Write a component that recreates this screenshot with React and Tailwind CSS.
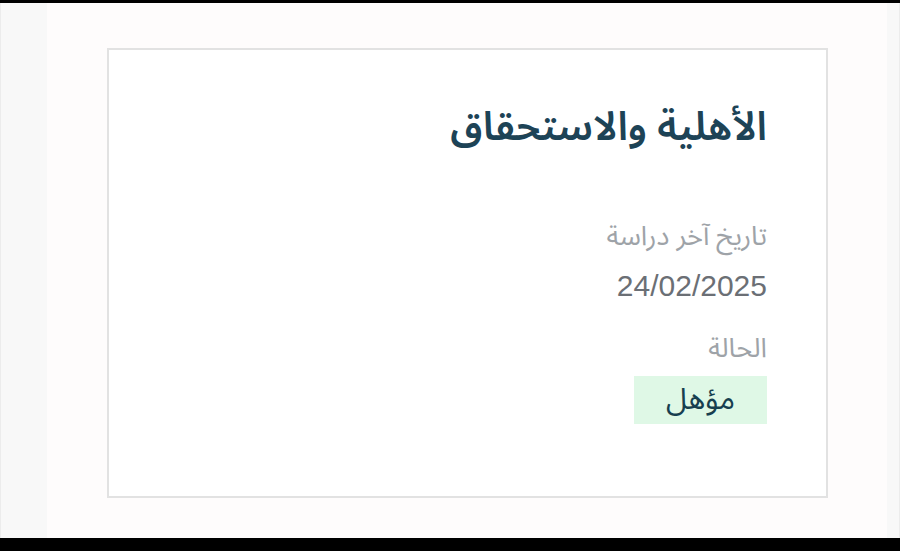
import React from "react";

const arabic = { fontFamily: '"Noto Sans Arabic", "Noto Sans", "DejaVu Sans", sans-serif' };

const Label = ({ children, className = "" }) => (
  <div className={"text-[27px] leading-[32px] text-[#9ea3a8] " + className}>{children}</div>
);

export default function App() {
  return (
    <div dir="rtl" className="flex h-[551px] w-[900px] flex-col bg-black pt-[3px] pb-[13px]" style={arabic}>
      <div className="flex flex-1 flex-row-reverse bg-[#f8f8f8]">
        <div className="w-[47px] border-l border-[#ececec]" />
        <div className="flex flex-1 flex-col bg-[#fefcfc] pt-[45px] pr-[59px] pl-[60px]">
          <div className="h-[450px] border-2 border-[#e2e2e2] bg-white px-[59px] pt-[55px]">
            <h2 className="text-[40px] font-semibold leading-[46px] text-[#1d4356]">الأهلية والاستحقاق</h2>
            <div className="mt-[70px] flex flex-col items-start">
              <Label>تاريخ آخر دراسة</Label>
              <div
                className="mt-[17px] text-[30px] leading-[32px] text-[#6b6f75]"
                style={{ fontFamily: '"Liberation Sans", Arial, sans-serif' }}
              >
                24/02/2025
              </div>
              <Label className="mt-[31px]">الحالة</Label>
              <div className="mt-[11px] flex h-[48px] w-[133px] items-center justify-center bg-[#dff8e6] text-[30px] leading-[40px] text-[#173f4f]">
                مؤهل
              </div>
            </div>
          </div>
        </div>
        <div className="w-[13px] border-r border-[#ececec]" />
      </div>
    </div>
  );
}
